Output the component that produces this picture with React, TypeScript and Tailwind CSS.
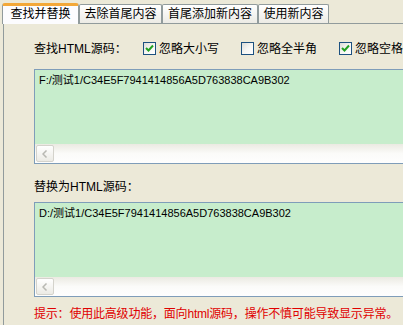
import { useState } from 'react';

const TABS = ['查找并替换', '去除首尾内容', '首尾添加新内容', '使用新内容'];
const TAB_WIDTHS = ['w-[77px]', 'w-[83px]', 'w-[96px]', 'w-[71px]'];

function XpCheck({ label, checked }: { label: string; checked: boolean }) {
  return (
    <label className="flex items-center gap-[3px] whitespace-nowrap">
      <span className="shrink-0 w-[13px] h-[13px] border border-[#1c5180] bg-gradient-to-br from-[#dcdcd7] via-[#f6f6f3] to-white flex items-center justify-center">
        {checked && (
          <svg width="9" height="9" viewBox="0 0 9 9">
            <path d="M1 4 L3.5 6.5 L8 1.5" fill="none" stroke="#21a121" strokeWidth="2" />
          </svg>
        )}
      </span>
      <span>{label}</span>
    </label>
  );
}

function SourceBox({ text }: { text: string }) {
  return (
    <div className="w-[390px] h-[95px] border border-[#7f9db9] bg-[#c7edcc] flex flex-col">
      <div className="flex-1 pl-[4px] pt-[3px] leading-[14px] text-[11px] font-['Liberation_Sans','Noto_Sans_CJK_SC',sans-serif] text-black">
        {text}
      </div>
      {/* Horizontal scroll bar */}
      <div className="h-[19px] bg-gradient-to-b from-[#ebeae2] via-[#fbfbf9] to-[#fefefe] flex items-center pl-[1px]">
        <div className="w-[18px] h-[17px] rounded-[2px] border border-[#d4d3cc] bg-gradient-to-b from-white to-[#ecebe5] flex items-center justify-center">
          <svg width="6" height="8" viewBox="0 0 6 8">
            <path d="M4.5 0.5 L1 4 L4.5 7.5" fill="none" stroke="#b8b8b2" strokeWidth="1.5" />
          </svg>
        </div>
      </div>
    </div>
  );
}

export default function App() {
  const [active] = useState(0);

  return (
    <div className="w-[403px] h-[325px] overflow-hidden bg-[#ece9d8] text-[12px] text-black font-['Liberation_Sans','Noto_Sans_CJK_SC',sans-serif]">
      {/* Tab strip */}
      <div className="h-[23px] flex items-end pl-[2px]">
        {TABS.map((t, i) =>
          i === active ? (
            <div
              key={t}
              className={`${TAB_WIDTHS[i]} h-[21px] -mb-px pb-[3px] relative z-10 border-x border-[#919b9c] border-t-[3px] border-t-[#f3a838] rounded-t-[3px] bg-[#fcfcfe] flex items-center justify-center leading-none`}
            >
              {t}
            </div>
          ) : (
            <div
              key={t}
              className={`${TAB_WIDTHS[i]} h-[19px] border border-b-0 border-[#919b9c] rounded-t-[2px] bg-gradient-to-b from-white to-[#ecebe5] flex items-center justify-center leading-none`}
            >
              {t}
            </div>
          ),
        )}
      </div>

      {/* Tab page */}
      <div className="ml-[3px] h-[302px] border-l border-t border-[#919b9c] bg-[#ece9d8] pl-[30px] overflow-hidden">
        <div className="h-[45px] pt-[4px] flex items-center whitespace-nowrap">
          <span className="w-[109px] shrink-0">查找HTML源码：</span>
          <div className="w-[98px] shrink-0"><XpCheck label="忽略大小写" checked /></div>
          <div className="w-[98px] shrink-0"><XpCheck label="忽略全半角" checked={false} /></div>
          <div className="shrink-0"><XpCheck label="忽略空格" checked /></div>
        </div>
        <SourceBox text="F:/测试1/C34E5F7941414856A5D763838CA9B302" />
        <div className="h-[38px] flex items-center pt-[8px]">替换为HTML源码：</div>
        <SourceBox text="D:/测试1/C34E5F7941414856A5D763838CA9B302" />
        <div className="mt-[8px] text-[#e00000] whitespace-nowrap tracking-[-0.2px]">
          提示：使用此高级功能，面向html源码，操作不慎可能导致显示异常。
        </div>
      </div>
    </div>
  );
}
